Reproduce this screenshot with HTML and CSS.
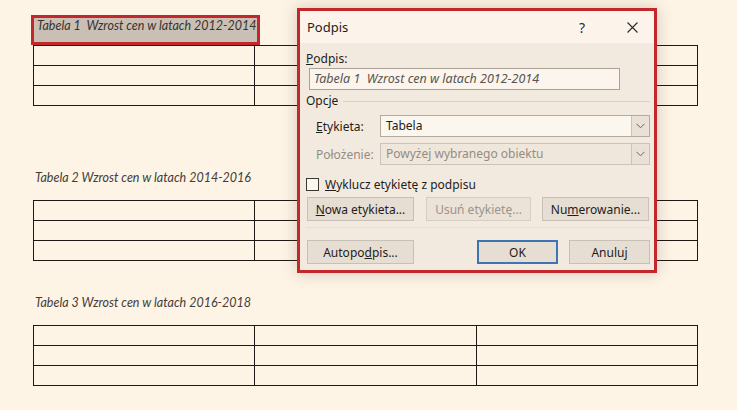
FILE: index.html
```html
<!DOCTYPE html>
<html lang="pl">
<head>
    <meta charset="UTF-8">
    <meta name="viewport" content="width=device-width, initial-scale=1.0">
    <title>Podpis</title>
    <link rel="stylesheet" href="styles.css">
</head>
<body>

    <div class="page">
        <!-- Dokument z tabelami -->
        <div class="doc">
            <section class="block block-first">
                <p class="caption caption-selected">Tabela 1&nbsp; Wzrost cen w latach 2012-2014</p>
                <table class="grid">
                    <tr><td></td><td></td><td></td></tr>
                    <tr><td></td><td></td><td></td></tr>
                    <tr><td></td><td></td><td></td></tr>
                </table>
            </section>

            <section class="block block-second">
                <p class="caption">Tabela 2 Wzrost cen w latach 2014-2016</p>
                <table class="grid">
                    <tr><td></td><td></td><td></td></tr>
                    <tr><td></td><td></td><td></td></tr>
                    <tr><td></td><td></td><td></td></tr>
                </table>
            </section>

            <section class="block block-third">
                <p class="caption">Tabela 3 Wzrost cen w latach 2016-2018</p>
                <table class="grid">
                    <tr><td></td><td></td><td></td></tr>
                    <tr><td></td><td></td><td></td></tr>
                    <tr><td></td><td></td><td></td></tr>
                </table>
            </section>
        </div>

        <!-- Okno dialogowe Podpis -->
        <div class="dialog">
            <div class="titlebar">
                <span class="title">Podpis</span>
                <span class="title-btn help">?</span>
                <span class="title-btn close">
                    <svg width="11" height="11" viewBox="0 0 11 11">
                        <path d="M0.5 0.5 L10.5 10.5 M10.5 0.5 L0.5 10.5" stroke="#2b2b2b" stroke-width="1.1" fill="none"/>
                    </svg>
                </span>
            </div>

            <div class="body">
                <div class="label"><u>P</u>odpis:</div>
                <div class="textbox">Tabela 1&nbsp; Wzrost cen w latach 2012-2014</div>

                <div class="group">
                    <span>Opcje</span>
                    <span class="group-line"></span>
                </div>

                <div class="field">
                    <span class="field-label"><u>E</u>tykieta:</span>
                    <div class="combo">
                        <span class="combo-text">Tabela</span>
                        <span class="combo-arrow">
                            <svg width="9" height="6" viewBox="0 0 9 6"><path d="M0.5 0.8 L4.5 4.8 L8.5 0.8" stroke="#6b655e" stroke-width="1" fill="none"/></svg>
                        </span>
                    </div>
                </div>

                <div class="field field-disabled">
                    <span class="field-label">Położenie:</span>
                    <div class="combo combo-disabled">
                        <span class="combo-text">Powyżej wybranego obiektu</span>
                        <span class="combo-arrow">
                            <svg width="9" height="6" viewBox="0 0 9 6"><path d="M0.5 0.8 L4.5 4.8 L8.5 0.8" stroke="#6b655e" stroke-width="1" fill="none"/></svg>
                        </span>
                    </div>
                </div>

                <label class="check">
                    <span class="check-box"></span>
                    <span><u>W</u>yklucz etykietę z podpisu</span>
                </label>

                <div class="buttons">
                    <button class="btn btn-wide"><u>N</u>owa etykieta...</button>
                    <button class="btn btn-wide btn-disabled">Usuń etykietę...</button>
                    <button class="btn btn-wide">Nu<u>m</u>erowanie...</button>
                </div>

                <div class="separator"></div>

                <div class="buttons">
                    <button class="btn btn-wide">Autopo<u>d</u>pis...</button>
                    <button class="btn btn-ok">OK</button>
                    <button class="btn btn-small">Anuluj</button>
                </div>
            </div>
        </div>
    </div>

</body>
</html>
```

FILE: styles.css
```css
body {
    margin: 0;
    padding: 0;
    background-color: #fdf4e6;
    font-family: "Noto Sans", Arial, sans-serif;
}

.page {
    position: relative;
    width: 737px;
    height: 410px;
    overflow: hidden;
}

.doc {
    padding-left: 33px;
}

.block-first {
    padding-top: 15px;
}

.block-second {
    padding-top: 62px;
}

.block-third {
    padding-top: 32px;
}

.caption {
    margin: 0 0 12px 0;
    padding-left: 2px;
    font-family: "Lato", "Liberation Sans", sans-serif;
    font-style: italic;
    font-size: 12.5px;
    line-height: 20px;
    color: #443c36;
}

.caption-selected {
    display: block;
    box-sizing: border-box;
    width: 229px;
    height: 30px;
    margin: 0 0 0 -2px;
    padding: 0 0 0 3px;
    line-height: 16px;
    background-color: #c9bfb4;
    border: 3px solid #c3272c;
    color: #3a322c;
}

.grid {
    border-collapse: collapse;
    width: 665px;
}

.grid td {
    border: 1px solid #1f1914;
    height: 19px;
    padding: 0;
    width: 33.3%;
}

/* Okno dialogowe */
.dialog {
    position: absolute;
    left: 297px;
    top: 8px;
    width: 354px;
    height: 259px;
    border: 3px solid #c3272c;
    background-color: #f2eadf;
    box-shadow: 0 0 14px rgba(90, 60, 40, 0.25);
    font-size: 12px;
    color: #1f1c1a;
}

.titlebar {
    display: flex;
    align-items: center;
    height: 32px;
    padding-left: 7px;
    background-color: #fcf4ea;
}

.title {
    font-size: 13px;
    flex: 1;
}

.title-btn {
    width: 44px;
    display: flex;
    justify-content: center;
    align-items: center;
    font-size: 14px;
    color: #2b2b2b;
}

.help {
    margin-right: 6px;
}

.body {
    padding: 8px 4px 0 6px;
}

.label {
    line-height: 16px;
}

.textbox {
    box-sizing: border-box;
    width: 311px;
    height: 22px;
    margin: 1px 0 0 3px;
    padding-left: 4px;
    border: 1px solid #aaa298;
    background-color: #fbf5ed;
    font-style: italic;
    font-size: 12.5px;
    line-height: 20px;
    color: #5a544e;
}

.group {
    display: flex;
    align-items: center;
    margin-top: 3px;
    line-height: 16px;
}

.group-line {
    flex: 1;
    height: 1px;
    margin: 1px 0 0 5px;
    background-color: #dcd3c7;
}

.field {
    display: flex;
    align-items: center;
    margin-top: 6px;
    padding-left: 10px;
}

.field-label {
    width: 64px;
}

.field-disabled .field-label {
    color: #948c83;
}

.combo {
    box-sizing: border-box;
    display: flex;
    width: 270px;
    height: 22px;
    border: 1px solid #b2aa9f;
    background-color: #fbf6ee;
}

.combo-text {
    flex: 1;
    padding-left: 5px;
    line-height: 20px;
}

.combo-disabled {
    background-color: #efe7dc;
    border-color: #cbc3b8;
    color: #948c83;
}

.combo-arrow {
    width: 17px;
    display: flex;
    justify-content: center;
    align-items: center;
    border-left: 1px solid #cbc3b8;
    background-color: #e9e1d6;
}

.check {
    display: flex;
    align-items: center;
    gap: 6px;
    margin-top: 13px;
    height: 13px;
}

.check-box {
    box-sizing: border-box;
    width: 13px;
    height: 13px;
    border: 1px solid #3a3632;
    background-color: #fbf6ee;
}

.buttons {
    display: flex;
    margin-top: 6px;
    padding-left: 1px;
}

.btn {
    box-sizing: border-box;
    height: 24px;
    padding: 0;
    border: 1px solid #c8c0b5;
    background-color: #e6ded3;
    font-family: "Noto Sans", Arial, sans-serif;
    font-size: 12px;
    color: #1f1c1a;
}

.btn-wide {
    width: 107px;
    margin-right: 12px;
}

.btn-wide:last-child {
    margin-right: 0;
}

.btn-disabled {
    width: 105px;
    margin-right: 11px;
    background-color: #ebe3d8;
    border-color: #d6cec3;
    color: #9b938a;
}

.btn-ok {
    width: 81px;
    margin-left: 51px;
    margin-right: 11px;
    border: 2px solid #3f74b4;
}

.btn-small {
    width: 81px;
}

.separator {
    height: 1px;
    margin: 6px 0 12px 0;
    background-color: #e7dfd3;
}
```
